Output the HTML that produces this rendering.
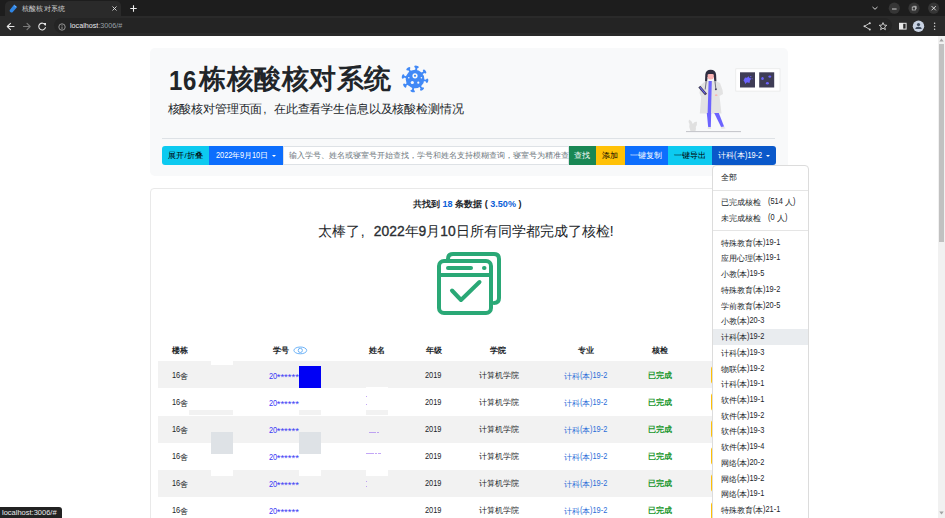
<!DOCTYPE html>
<html><head><meta charset="utf-8">
<style>
*{margin:0;padding:0;box-sizing:border-box}
html,body{width:945px;height:518px;overflow:hidden;background:#fff;font-family:"Liberation Sans",sans-serif;position:relative}
.a{position:absolute}
.t{white-space:nowrap;line-height:1}
/* chrome */
#tabbar{left:0;top:0;width:945px;height:17px;background:#1d1d1d}
#tab{left:5px;top:1px;width:116px;height:16px;background:#2a2a2a;border-radius:5px 5px 0 0}
#toolbar{left:0;top:16px;width:945px;height:19.5px;background:#2a2a2a}
#omni{left:53.5px;top:18px;width:838px;height:15px;background:#242424;border-radius:8px}
.btn{position:absolute;top:146px;height:18.5px;color:#fff;font-size:8px;line-height:18.5px;padding-top:1.2px;text-align:center;white-space:nowrap}
.car{display:inline-block;width:0;height:0;border-top:2.4px solid currentColor;border-left:2.2px solid transparent;border-right:2.2px solid transparent;vertical-align:1.6px;margin-left:3.8px}
.L{display:inline-block;white-space:nowrap}.L>span{display:inline-block;transform-origin:0 0;line-height:8px}
.dd{position:absolute;left:721px;font-size:8px;color:#212529;white-space:nowrap;line-height:1}
.row{position:absolute;left:158px;width:630px;height:27.1px}
.g{background:#f2f2f2}
.c{position:absolute;font-size:8px;color:#212529;white-space:nowrap;line-height:1}
.h{font-weight:bold}
</style></head>
<body>
<div id="tabbar" class="a"></div>
<div id="tab" class="a"></div>
<svg class="a" style="left:9px;top:4px" width="9" height="9" viewBox="0 0 9 9"><path d="M5.2 0.6 L8.2 3 L3.6 8.2 Q2.6 9 1.6 8.2 L0.9 7.5 Q0.3 6.6 1 5.7 Z" fill="#2f86e6"/><path d="M5.3 1.8 L7 3.1" stroke="#fff" stroke-width="0.6" opacity="0.7"/></svg>
<div class="a t" style="left:21.8px;top:5px;font-size:7px;letter-spacing:0.33px;color:#cfcfcf">核酸核对系统</div>
<svg class="a" style="left:112px;top:5.8px" width="5" height="5" viewBox="0 0 5 5"><path d="M0.5 0.5 L4.5 4.5 M4.5 0.5 L0.5 4.5" stroke="#e0e0e0" stroke-width="0.9"/></svg>
<svg class="a" style="left:130px;top:5px" width="7" height="7" viewBox="0 0 7 7"><path d="M3.5 0.3 V6.7 M0.3 3.5 H6.7" stroke="#f0f0f0" stroke-width="1.1"/></svg>
<div id="toolbar" class="a"></div>
<div id="omni" class="a"></div>
<svg class="a" style="left:6px;top:22px" width="44" height="9" viewBox="0 0 44 9">
<g fill="none" stroke-width="1.1" stroke-linecap="round" stroke-linejoin="round">
<path d="M8 4.5 H1.5 M4.5 1.3 L1.3 4.5 L4.5 7.7" stroke="#e6e6e6"/>
<path d="M17.5 4.5 H24 M21 1.3 L24.2 4.5 L21 7.7" stroke="#7a7a7a"/>
<path d="M39.2 3 A3.4 3.4 0 1 0 39.4 5.6" stroke="#e6e6e6"/>
</g>
<path d="M37.2 1 L40 1 L40 3.8 Z" fill="#e6e6e6"/>
</svg>
<svg class="a" style="left:58px;top:23px" width="8" height="8" viewBox="0 0 8 8"><circle cx="4" cy="4" r="3.2" fill="none" stroke="#a0a0a0" stroke-width="0.9"/><path d="M4 3.5 V6" stroke="#a0a0a0" stroke-width="0.9"/><circle cx="4" cy="2.3" r="0.5" fill="#a0a0a0"/></svg>
<div class="a t" style="left:70px;top:21.5px;font-size:7.2px;color:#e8eaed">localhost<span style="color:#9aa0a6">:3006/#</span></div>
<svg class="a" style="left:860px;top:20px" width="85" height="14" viewBox="860 20 85 14">
<g fill="none" stroke="#d5d5d5" stroke-width="0.9">
<path d="M869.6 23.2 L864.5 26.3 L869.6 29.4"/>
<path d="M883 22.6 L884.1 25.1 L886.8 25.3 L884.7 27 L885.4 29.7 L883 28.2 L880.6 29.7 L881.3 27 L879.2 25.3 L881.9 25.1 Z"/>
</g>
<g fill="#d5d5d5"><circle cx="869.8" cy="23.3" r="1"/><circle cx="864.5" cy="26.3" r="1"/><circle cx="869.8" cy="29.4" r="1"/></g>
<rect x="899" y="22.8" width="7.6" height="6.8" fill="#e8e8e8"/>
<rect x="903.2" y="23.8" width="2.4" height="4.8" fill="#2a2a2a"/>
<circle cx="918.5" cy="26.2" r="5.7" fill="#c9d3e3"/>
<circle cx="918.5" cy="24.6" r="1.6" fill="#3d4a5c"/>
<path d="M915.3 29 Q915.5 26.8 918.5 26.8 Q921.5 26.8 921.7 29 Z" fill="#3d4a5c"/>
<g fill="#d5d5d5"><circle cx="934.6" cy="23.2" r="0.75"/><circle cx="934.6" cy="26.2" r="0.75"/><circle cx="934.6" cy="29.2" r="0.75"/></g>
</svg>
<svg class="a" style="left:868px;top:0" width="77" height="17" viewBox="868 0 77 17">
<path d="M872.5 7 L875 9.3 L877.5 7" fill="none" stroke="#d5d5d5" stroke-width="1"/>
<circle cx="894.3" cy="8.2" r="5.6" fill="#363636"/>
<path d="M892 9 H896.6" stroke="#e0e0e0" stroke-width="0.9"/>
<circle cx="914" cy="8.2" r="5.6" fill="#363636"/>
<rect x="912.2" y="7" width="3.2" height="3" fill="none" stroke="#cfcfcf" stroke-width="0.7"/>
<path d="M913.3 6.3 H916.2 V9.1" fill="none" stroke="#cfcfcf" stroke-width="0.7"/>
<circle cx="933.7" cy="8.2" r="5.6" fill="#363636"/>
<path d="M931.6 6.1 L935.8 10.3 M935.8 6.1 L931.6 10.3" stroke="#e6e6e6" stroke-width="0.9"/>
</svg>

<!-- scrollbar -->
<div class="a" style="left:938px;top:36px;width:7px;height:482px;background:#f1f1f1"></div>
<div class="a" style="left:939px;top:44px;width:5px;height:198px;background:#c1c1c1"></div>

<svg class="a" style="left:938px;top:36px" width="7" height="482" viewBox="0 0 7 482"><path d="M1.3 5.6 L3.5 2.6 L5.7 5.6 Z" fill="#a3a3a3"/><path d="M1.3 475.5 L3.5 478.5 L5.7 475.5 Z" fill="#a3a3a3"/></svg>
<!-- jumbotron -->
<div class="a" style="left:150px;top:47.5px;width:637.8px;height:128.6px;background:#f8f9fa;border-radius:5px"></div>
<div class="a t" style="left:168px;top:66.2px;font-size:27px;letter-spacing:0.55px;font-weight:bold;color:#212529"><span style="display:inline-block;transform:translate(-0.6px,1.9px) scaleX(0.89)">16</span>栋核酸核对系统</div>
<div class="a t" style="left:167.5px;top:103.3px;font-size:11.74px;letter-spacing:-0.16px;color:#212529">核酸核对管理页面<span style="display:inline-block;width:1em;text-indent:0.08em">,</span>在此查看学生信息以及核酸检测情况</div>
<div class="a" style="left:162px;top:137.5px;width:613px;height:1px;background:#dee2e6"></div>


<!-- virus -->
<svg class="a" style="left:399px;top:63.3px" width="32" height="32" viewBox="-16 -16 32 32">
<g fill="#4189f6" stroke="#4189f6">
<circle r="9.3" stroke="none"/>
<g stroke-width="1.9" stroke-linecap="round">
<g transform="rotate(-83)"><line x1="8" y1="0" x2="11.5" y2="0"/><ellipse cx="12.2" cy="0" rx="1.25" ry="2.3" stroke="none"/></g>
<g transform="rotate(-38)"><line x1="8" y1="0" x2="11.5" y2="0"/><ellipse cx="12.2" cy="0" rx="1.25" ry="2.3" stroke="none"/></g>
<g transform="rotate(8)"><line x1="8" y1="0" x2="11.5" y2="0"/><ellipse cx="12.2" cy="0" rx="1.25" ry="2.3" stroke="none"/></g>
<g transform="rotate(55)"><line x1="8" y1="0" x2="11.5" y2="0"/><ellipse cx="12.2" cy="0" rx="1.25" ry="2.3" stroke="none"/></g>
<g transform="rotate(101)"><line x1="8" y1="0" x2="11.5" y2="0"/><ellipse cx="12.2" cy="0" rx="1.25" ry="2.3" stroke="none"/></g>
<g transform="rotate(147)"><line x1="8" y1="0" x2="11.5" y2="0"/><ellipse cx="12.2" cy="0" rx="1.25" ry="2.3" stroke="none"/></g>
<g transform="rotate(192)"><line x1="8" y1="0" x2="11.5" y2="0"/><ellipse cx="12.2" cy="0" rx="1.25" ry="2.3" stroke="none"/></g>
<g transform="rotate(237)"><line x1="8" y1="0" x2="11.5" y2="0"/><ellipse cx="12.2" cy="0" rx="1.25" ry="2.3" stroke="none"/></g>
</g>
</g>
<g fill="#f8f9fa">
<circle cx="0" cy="-3.2" r="2.6"/>
<circle cx="-6.2" cy="-1.2" r="0.8"/>
<circle cx="6.4" cy="-1.2" r="0.8"/>
<circle cx="-2.7" cy="3.5" r="1.6"/>
<circle cx="3.3" cy="3.7" r="1.1"/>
</g>
<circle cx="0" cy="-3.2" r="1.1" fill="#4189f6"/>
</svg>

<!-- doctor illustration -->
<svg class="a" style="left:684px;top:64px" width="110" height="72" viewBox="684 64 110 72">
<line x1="686" y1="131.6" x2="741" y2="131.6" stroke="#8d8c99" stroke-width="0.5"/>
<!-- plant -->
<path d="M690.5 131 Q688.5 127 689.5 124 Q688 121.5 689 119.5 Q692 120.5 692.8 124 Q694.5 121 697 121.8 Q697.3 125 695.8 127 Q696.3 129.5 695.5 131 Z" fill="#e0e0e0"/>
<!-- frame -->
<rect x="735.8" y="68.8" width="44.2" height="22.3" fill="#fff" stroke="#e6e6e6" stroke-width="0.7"/>
<rect x="740" y="72.3" width="15" height="15.2" fill="#3f3d56"/>
<rect x="759.2" y="72.3" width="15" height="15.2" fill="#3f3d56"/>
<path d="M743.5 80.5 L745 77.5 L747 77.8 L748.5 76.2 L749.6 78 L751.5 78.6 L750 80.5 L749.5 83 L747 82.2 L745.2 84 L744.6 82 Z" fill="#6c63ff"/>
<circle cx="750.8" cy="76.6" r="0.7" fill="#6c63ff"/>
<circle cx="752.2" cy="78.8" r="0.5" fill="#6c63ff"/>
<ellipse cx="762.5" cy="78.5" rx="1.3" ry="1.6" fill="#6c63ff"/>
<ellipse cx="769.8" cy="76.6" rx="1.4" ry="1.2" fill="#6c63ff"/>
<ellipse cx="767.4" cy="83.2" rx="1.5" ry="1.2" fill="#6c63ff"/>
<!-- coat -->
<path d="M705.5 81 L715.5 81 L720 83 L722.5 90 L723 94 L719.5 96 L721.5 113.5 L699.8 113.5 L701.2 97 L699.5 93 L700.8 85 Z" fill="#e3e3e3"/>
<!-- legs -->
<path d="M706.8 113 L711.2 113 L710.8 127.3 L708.2 127.3 Z" fill="#6c63ff"/>
<path d="M714.2 113 L718.8 113 L724.2 126.8 L721.2 127.3 Z" fill="#6c63ff"/>
<!-- shoes -->
<path d="M707.6 127.2 L711 127.2 L711.2 129 L707.8 129 Z" fill="#e6e6e6"/>
<path d="M720.8 127 L724.4 126.6 L725.5 128.6 L721.5 129 Z" fill="#e6e6e6"/>
<!-- scrubs strip -->
<path d="M708.6 81 L711.8 81 L711 113 L707.6 113 Z" fill="#6c63ff"/>
<!-- stethoscope -->
<path d="M706.2 81.5 L705.2 89.5 M715 81.5 L715.8 88.6" stroke="#3f3d56" stroke-width="0.7" fill="none"/>
<circle cx="715.9" cy="89.3" r="1" fill="#3f3d56"/>
<!-- hands -->
<circle cx="705.6" cy="93.6" r="1.1" fill="#f9b3b3"/>
<ellipse cx="716.2" cy="95.2" rx="1.3" ry="0.9" fill="#f9b3b3"/>
<!-- clipboard -->
<path d="M698.3 87.4 L700.3 85.8 L707 93.8 L705 95.3 Z" fill="#3f3d56"/>
<path d="M699.6 87.5 L700.4 86.9 L705.6 93.2 L704.8 93.8 Z" fill="#6c63ff"/>
<!-- hair -->
<path d="M705 81.2 L705.3 74.5 Q705.8 69.8 710.7 69.8 Q715.6 69.8 716.1 74.5 L716.4 81.2 L714.3 81.2 L713.8 77 L707.6 77 L707.1 81.2 Z" fill="#2f2e41"/>
<!-- face -->
<path d="M707.6 74 L713.8 74 L713.8 77.5 Q713.5 79.5 710.7 79.5 Q707.9 79.5 707.6 77.5 Z" fill="#f9b3b3"/>
<path d="M707 74.8 Q710.7 72.8 714.4 74.8 L714.4 72.5 L707 72.5 Z" fill="#2f2e41"/>
</svg>

<!-- toolbar buttons -->
<div class="btn" style="left:162px;width:47px;background:#0dcaf0;color:#000;border-radius:3px 0 0 3px">展开/折叠</div>
<div class="btn" style="left:209px;width:74px;background:#0d6efd"><span class="L" style="width:16.37px"><span style="font-size:9.2px;transform:scaleX(0.8)">2022</span></span>年<span class="L" style="width:4.09px"><span style="font-size:9.2px;transform:scaleX(0.8)">9</span></span>月<span class="L" style="width:8.19px"><span style="font-size:9.2px;transform:scaleX(0.8)">10</span></span>日<i class="car"></i></div>
<div class="a" style="left:283px;top:146px;width:285.5px;height:18.5px;background:#fff;border:0.5px solid #dee2e6"></div>
<div class="a t" style="left:289px;top:152px;font-size:7.6px;color:#6c757d">输入学号、姓名或寝室号开始查找，学号和姓名支持模糊查询，寝室号为精准查</div>
<div class="btn" style="left:568.5px;width:27.7px;background:#198754">查找</div>
<div class="btn" style="left:596.2px;width:28.5px;background:#ffc107;color:#000">添加</div>
<div class="btn" style="left:624.7px;width:43.5px;background:#0d6efd">一键复制</div>
<div class="btn" style="left:668.2px;width:43.8px;background:#0dcaf0;color:#000">一键导出</div>
<div class="btn" style="left:712px;width:64px;background:#0a58ca;border-radius:0 3px 3px 0">计科<span class="L" style="width:2.45px"><span style="font-size:9.2px;transform:scaleX(0.8)">(</span></span>本<span class="L" style="width:17.18px"><span style="font-size:9.2px;transform:scaleX(0.8)">)19-2</span></span><i class="car"></i></div>

<!-- card -->
<div class="a" style="left:150px;top:188px;width:638px;height:340px;border:1px solid #e9e9e9;border-radius:4px"></div>
<div class="a t" style="left:413px;top:200.2px;font-size:9.08px;font-weight:bold;color:#212529">共找到 <span style="color:#0b5ed7">18</span> 条数据 ( <span style="color:#0b5ed7">3.50%</span> )</div>
<div class="a t" style="left:318px;top:224.5px;font-size:13.84px;color:#212529">太棒了<span style="display:inline-block;width:1em;text-indent:0.05em">,</span><b style="color:#2b2f33;font-weight:normal;-webkit-text-stroke:0.35px #2b2f33">2022</b>年<b style="color:#2b2f33;font-weight:normal;-webkit-text-stroke:0.35px #2b2f33">9</b>月<b style="color:#2b2f33;font-weight:normal;-webkit-text-stroke:0.35px #2b2f33">10</b>日所有同学都完成了核检!</div>

<svg class="a" style="left:436px;top:251px" width="66" height="66" viewBox="0 0 66 66">
<g fill="none" stroke="#2aa876" stroke-width="4" stroke-linecap="round" stroke-linejoin="round">
<path d="M12 8 Q12 3 17 3 L58 3 Q63 3 63 8 L63 47 Q63 52 58 52"/>
<rect x="3" y="10" width="52" height="52" rx="5"/>
<line x1="3" y1="24" x2="55" y2="24"/>
<line x1="12" y1="17" x2="35" y2="17"/>
<line x1="48" y1="17" x2="48.5" y2="17"/>
<path d="M16 39.5 L25 49 L43.5 31"/>
</g>
</svg>

<!-- table -->
<div class="c h" style="left:172px;top:346.7px">楼栋</div>
<div class="c h" style="left:273px;top:346.7px">学号</div>
<div class="c h" style="left:369px;top:346.7px">姓名</div>
<div class="c h" style="left:426px;top:346.7px">年级</div>
<div class="c h" style="left:490px;top:346.7px">学院</div>
<div class="c h" style="left:578px;top:346.7px">专业</div>
<div class="c h" style="left:652px;top:346.7px">核检</div>

<svg class="a" style="left:293px;top:345.5px" width="15" height="9" viewBox="0 0 15 9"><ellipse cx="7.3" cy="4.4" rx="6.4" ry="3.4" fill="none" stroke="#6db3f8" stroke-width="1"/><circle cx="7.3" cy="4.4" r="2.1" fill="none" stroke="#6db3f8" stroke-width="1"/></svg>
<div id="rows">
<div class="row g" style="top:361.3px"></div>
<div class="c" style="left:172px;top:371.6px"><span class="L" style="width:8.23px"><span style="font-size:9.8px;transform:translateY(-0.6px) scaleX(0.755)">16</span></span>舍</div>
<div class="c" style="left:268.5px;top:371.6px;color:#3b3bf5"><span class="L" style="width:8.23px"><span style="font-size:9.8px;transform:translateY(-0.6px) scaleX(0.755)">20</span></span><span style="font-size:9.5px">******</span></div>
<div class="c" style="left:425px;top:371.6px"><span class="L" style="width:16.46px"><span style="font-size:9.8px;transform:translateY(-0.6px) scaleX(0.755)">2019</span></span></div>
<div class="c" style="left:479px;top:371.6px">计算机学院</div>
<div class="c" style="left:564px;top:371.6px;color:#2a6dd8">计科<span class="L" style="width:2.46px"><span style="font-size:9.8px;transform:translateY(-0.6px) scaleX(0.755)">(</span></span>本<span class="L" style="width:17.27px"><span style="font-size:9.8px;transform:translateY(-0.6px) scaleX(0.755)">)19-2</span></span></div>
<div class="c h" style="left:648px;top:371.6px;color:#17962b">已完成</div>
<div class="a" style="left:711px;top:365.8px;width:20px;height:18px;background:#ffc107;border-radius:3px"></div>
<div class="row" style="top:388.4px"></div>
<div class="c" style="left:172px;top:398.7px"><span class="L" style="width:8.23px"><span style="font-size:9.8px;transform:translateY(-0.6px) scaleX(0.755)">16</span></span>舍</div>
<div class="c" style="left:268.5px;top:398.7px;color:#3b3bf5"><span class="L" style="width:8.23px"><span style="font-size:9.8px;transform:translateY(-0.6px) scaleX(0.755)">20</span></span><span style="font-size:9.5px">******</span></div>
<div class="c" style="left:425px;top:398.7px"><span class="L" style="width:16.46px"><span style="font-size:9.8px;transform:translateY(-0.6px) scaleX(0.755)">2019</span></span></div>
<div class="c" style="left:479px;top:398.7px">计算机学院</div>
<div class="c" style="left:564px;top:398.7px;color:#2a6dd8">计科<span class="L" style="width:2.46px"><span style="font-size:9.8px;transform:translateY(-0.6px) scaleX(0.755)">(</span></span>本<span class="L" style="width:17.27px"><span style="font-size:9.8px;transform:translateY(-0.6px) scaleX(0.755)">)19-2</span></span></div>
<div class="c h" style="left:648px;top:398.7px;color:#17962b">已完成</div>
<div class="a" style="left:711px;top:392.9px;width:20px;height:18px;background:#ffc107;border-radius:3px"></div>
<div class="row g" style="top:415.6px"></div>
<div class="c" style="left:172px;top:425.9px"><span class="L" style="width:8.23px"><span style="font-size:9.8px;transform:translateY(-0.6px) scaleX(0.755)">16</span></span>舍</div>
<div class="c" style="left:268.5px;top:425.9px;color:#3b3bf5"><span class="L" style="width:8.23px"><span style="font-size:9.8px;transform:translateY(-0.6px) scaleX(0.755)">20</span></span><span style="font-size:9.5px">******</span></div>
<div class="c" style="left:425px;top:425.9px"><span class="L" style="width:16.46px"><span style="font-size:9.8px;transform:translateY(-0.6px) scaleX(0.755)">2019</span></span></div>
<div class="c" style="left:479px;top:425.9px">计算机学院</div>
<div class="c" style="left:564px;top:425.9px;color:#2a6dd8">计科<span class="L" style="width:2.46px"><span style="font-size:9.8px;transform:translateY(-0.6px) scaleX(0.755)">(</span></span>本<span class="L" style="width:17.27px"><span style="font-size:9.8px;transform:translateY(-0.6px) scaleX(0.755)">)19-2</span></span></div>
<div class="c h" style="left:648px;top:425.9px;color:#17962b">已完成</div>
<div class="a" style="left:711px;top:420.1px;width:20px;height:18px;background:#ffc107;border-radius:3px"></div>
<div class="row" style="top:442.7px"></div>
<div class="c" style="left:172px;top:453.0px"><span class="L" style="width:8.23px"><span style="font-size:9.8px;transform:translateY(-0.6px) scaleX(0.755)">16</span></span>舍</div>
<div class="c" style="left:268.5px;top:453.0px;color:#3b3bf5"><span class="L" style="width:8.23px"><span style="font-size:9.8px;transform:translateY(-0.6px) scaleX(0.755)">20</span></span><span style="font-size:9.5px">******</span></div>
<div class="c" style="left:425px;top:453.0px"><span class="L" style="width:16.46px"><span style="font-size:9.8px;transform:translateY(-0.6px) scaleX(0.755)">2019</span></span></div>
<div class="c" style="left:479px;top:453.0px">计算机学院</div>
<div class="c" style="left:564px;top:453.0px;color:#2a6dd8">计科<span class="L" style="width:2.46px"><span style="font-size:9.8px;transform:translateY(-0.6px) scaleX(0.755)">(</span></span>本<span class="L" style="width:17.27px"><span style="font-size:9.8px;transform:translateY(-0.6px) scaleX(0.755)">)19-2</span></span></div>
<div class="c h" style="left:648px;top:453.0px;color:#17962b">已完成</div>
<div class="a" style="left:711px;top:447.2px;width:20px;height:18px;background:#ffc107;border-radius:3px"></div>
<div class="row g" style="top:469.9px"></div>
<div class="c" style="left:172px;top:480.2px"><span class="L" style="width:8.23px"><span style="font-size:9.8px;transform:translateY(-0.6px) scaleX(0.755)">16</span></span>舍</div>
<div class="c" style="left:268.5px;top:480.2px;color:#3b3bf5"><span class="L" style="width:8.23px"><span style="font-size:9.8px;transform:translateY(-0.6px) scaleX(0.755)">20</span></span><span style="font-size:9.5px">******</span></div>
<div class="c" style="left:425px;top:480.2px"><span class="L" style="width:16.46px"><span style="font-size:9.8px;transform:translateY(-0.6px) scaleX(0.755)">2019</span></span></div>
<div class="c" style="left:479px;top:480.2px">计算机学院</div>
<div class="c" style="left:564px;top:480.2px;color:#2a6dd8">计科<span class="L" style="width:2.46px"><span style="font-size:9.8px;transform:translateY(-0.6px) scaleX(0.755)">(</span></span>本<span class="L" style="width:17.27px"><span style="font-size:9.8px;transform:translateY(-0.6px) scaleX(0.755)">)19-2</span></span></div>
<div class="c h" style="left:648px;top:480.2px;color:#17962b">已完成</div>
<div class="a" style="left:711px;top:474.4px;width:20px;height:18px;background:#ffc107;border-radius:3px"></div>
<div class="row" style="top:497.0px"></div>
<div class="c" style="left:172px;top:507.3px"><span class="L" style="width:8.23px"><span style="font-size:9.8px;transform:translateY(-0.6px) scaleX(0.755)">16</span></span>舍</div>
<div class="c" style="left:268.5px;top:507.3px;color:#3b3bf5"><span class="L" style="width:8.23px"><span style="font-size:9.8px;transform:translateY(-0.6px) scaleX(0.755)">20</span></span><span style="font-size:9.5px">******</span></div>
<div class="c" style="left:425px;top:507.3px"><span class="L" style="width:16.46px"><span style="font-size:9.8px;transform:translateY(-0.6px) scaleX(0.755)">2019</span></span></div>
<div class="c" style="left:479px;top:507.3px">计算机学院</div>
<div class="c" style="left:564px;top:507.3px;color:#2a6dd8">计科<span class="L" style="width:2.46px"><span style="font-size:9.8px;transform:translateY(-0.6px) scaleX(0.755)">(</span></span>本<span class="L" style="width:17.27px"><span style="font-size:9.8px;transform:translateY(-0.6px) scaleX(0.755)">)19-2</span></span></div>
<div class="c h" style="left:648px;top:507.3px;color:#17962b">已完成</div>
<div class="a" style="left:711px;top:501.5px;width:20px;height:18px;background:#ffc107;border-radius:3px"></div>
<div class="a" style="left:210.6px;top:361.3px;width:22.1px;height:4.2px;background:#fff"></div>
<div class="a" style="left:299.2px;top:365.5px;width:22.1px;height:22.0px;background:#0000f5"></div>
<div class="a" style="left:189px;top:387.6px;width:43.7px;height:1.4px;background:#fff"></div>
<div class="a" style="left:365.6px;top:387.4px;width:22.4px;height:1.6px;background:#fff"></div>
<div class="a" style="left:189px;top:410.2px;width:43.7px;height:5.2px;background:#f2f2f2"></div>
<div class="a" style="left:299.2px;top:410.2px;width:22.1px;height:5.2px;background:#f2f2f2"></div>
<div class="a" style="left:365.6px;top:409.8px;width:22.4px;height:5.6px;background:#f2f2f2"></div>
<div class="a" style="left:210.6px;top:432px;width:22.1px;height:22.0px;background:#dee2e6"></div>
<div class="a" style="left:299.2px;top:432px;width:22.1px;height:22.0px;background:#dee2e6"></div>
<div class="a" style="left:210.6px;top:469.5px;width:22.1px;height:6.3px;background:#fff"></div>
<div class="a" style="left:299.2px;top:469.5px;width:22.1px;height:6.3px;background:#fff"></div>
<div class="a" style="left:365.6px;top:469.5px;width:22.4px;height:6.3px;background:#fff"></div>
<div class="a" style="left:369px;top:432.2px;width:7px;height:0.9px;background:#9b6cf0;opacity:.6"></div>
<div class="a" style="left:377px;top:432.2px;width:2px;height:0.9px;background:#9b6cf0;opacity:.6"></div>
<div class="a" style="left:365.5px;top:452.8px;width:5px;height:0.9px;background:#9b6cf0;opacity:.6"></div>
<div class="a" style="left:371px;top:452.8px;width:3px;height:0.9px;background:#9b6cf0;opacity:.6"></div>
<div class="a" style="left:375px;top:452.8px;width:1.5px;height:0.9px;background:#9b6cf0;opacity:.6"></div>
<div class="a" style="left:378px;top:452.8px;width:3px;height:0.9px;background:#9b6cf0;opacity:.6"></div>
<div class="a" style="left:365.6px;top:480.6px;width:0.8px;height:0.9px;background:#9b6cf0;opacity:.6"></div>
<div class="a" style="left:365.6px;top:486.3px;width:0.8px;height:0.9px;background:#9b6cf0;opacity:.6"></div>
<div class="a" style="left:365.6px;top:404.2px;width:0.8px;height:0.9px;background:#9b6cf0;opacity:.6"></div>
<div class="a" style="left:366px;top:395.5px;width:0.6px;height:0.9px;background:#9b6cf0;opacity:.6"></div>
</div><!--/rows-->

<!-- dropdown -->
<div class="a" style="left:712px;top:165px;width:96.5px;height:360px;background:#fff;border:1px solid #dcdcdc;border-radius:4px"></div>
<div class="a" style="left:713px;top:329px;width:94.5px;height:15.7px;background:#e9ecef"></div>
<div class="a" style="left:713px;top:189.5px;width:94.5px;height:1px;background:#e5e5e5"></div>
<div class="a" style="left:713px;top:229.5px;width:94.5px;height:1px;background:#e5e5e5"></div>
<div id="dd">
<div class="dd" style="top:174.3px">全部</div>
<div class="dd" style="top:198.3px">已完成核检<span style="display:inline-block;width:7px"></span><span class="L" style="width:14.81px"><span style="font-size:9.8px;transform:translateY(-0.6px) scaleX(0.755)">(514</span></span><span style="display:inline-block;width:2.5px"></span>人<span class="L" style="width:2.46px"><span style="font-size:9.8px;transform:translateY(-0.6px) scaleX(0.755)">)</span></span></div>
<div class="dd" style="top:213.8px">未完成核检<span style="display:inline-block;width:7px"></span><span class="L" style="width:6.58px"><span style="font-size:9.8px;transform:translateY(-0.6px) scaleX(0.755)">(0</span></span><span style="display:inline-block;width:2.5px"></span>人<span class="L" style="width:2.46px"><span style="font-size:9.8px;transform:translateY(-0.6px) scaleX(0.755)">)</span></span></div>
<div class="dd" style="top:238.7px">特殊教育<span class="L" style="width:2.46px"><span style="font-size:9.8px;transform:translateY(-0.6px) scaleX(0.755)">(</span></span>本<span class="L" style="width:17.27px"><span style="font-size:9.8px;transform:translateY(-0.6px) scaleX(0.755)">)19-1</span></span></div>
<div class="dd" style="top:254.4px">应用心理<span class="L" style="width:2.46px"><span style="font-size:9.8px;transform:translateY(-0.6px) scaleX(0.755)">(</span></span>本<span class="L" style="width:17.27px"><span style="font-size:9.8px;transform:translateY(-0.6px) scaleX(0.755)">)19-1</span></span></div>
<div class="dd" style="top:270.1px">小教<span class="L" style="width:2.46px"><span style="font-size:9.8px;transform:translateY(-0.6px) scaleX(0.755)">(</span></span>本<span class="L" style="width:17.27px"><span style="font-size:9.8px;transform:translateY(-0.6px) scaleX(0.755)">)19-5</span></span></div>
<div class="dd" style="top:285.9px">特殊教育<span class="L" style="width:2.46px"><span style="font-size:9.8px;transform:translateY(-0.6px) scaleX(0.755)">(</span></span>本<span class="L" style="width:17.27px"><span style="font-size:9.8px;transform:translateY(-0.6px) scaleX(0.755)">)19-2</span></span></div>
<div class="dd" style="top:301.6px">学前教育<span class="L" style="width:2.46px"><span style="font-size:9.8px;transform:translateY(-0.6px) scaleX(0.755)">(</span></span>本<span class="L" style="width:17.27px"><span style="font-size:9.8px;transform:translateY(-0.6px) scaleX(0.755)">)20-5</span></span></div>
<div class="dd" style="top:317.3px">小教<span class="L" style="width:2.46px"><span style="font-size:9.8px;transform:translateY(-0.6px) scaleX(0.755)">(</span></span>本<span class="L" style="width:17.27px"><span style="font-size:9.8px;transform:translateY(-0.6px) scaleX(0.755)">)20-3</span></span></div>
<div class="dd" style="top:333.0px">计科<span class="L" style="width:2.46px"><span style="font-size:9.8px;transform:translateY(-0.6px) scaleX(0.755)">(</span></span>本<span class="L" style="width:17.27px"><span style="font-size:9.8px;transform:translateY(-0.6px) scaleX(0.755)">)19-2</span></span></div>
<div class="dd" style="top:348.7px">计科<span class="L" style="width:2.46px"><span style="font-size:9.8px;transform:translateY(-0.6px) scaleX(0.755)">(</span></span>本<span class="L" style="width:17.27px"><span style="font-size:9.8px;transform:translateY(-0.6px) scaleX(0.755)">)19-3</span></span></div>
<div class="dd" style="top:364.5px">物联<span class="L" style="width:2.46px"><span style="font-size:9.8px;transform:translateY(-0.6px) scaleX(0.755)">(</span></span>本<span class="L" style="width:17.27px"><span style="font-size:9.8px;transform:translateY(-0.6px) scaleX(0.755)">)19-2</span></span></div>
<div class="dd" style="top:380.2px">计科<span class="L" style="width:2.46px"><span style="font-size:9.8px;transform:translateY(-0.6px) scaleX(0.755)">(</span></span>本<span class="L" style="width:17.27px"><span style="font-size:9.8px;transform:translateY(-0.6px) scaleX(0.755)">)19-1</span></span></div>
<div class="dd" style="top:395.9px">软件<span class="L" style="width:2.46px"><span style="font-size:9.8px;transform:translateY(-0.6px) scaleX(0.755)">(</span></span>本<span class="L" style="width:17.27px"><span style="font-size:9.8px;transform:translateY(-0.6px) scaleX(0.755)">)19-1</span></span></div>
<div class="dd" style="top:411.6px">软件<span class="L" style="width:2.46px"><span style="font-size:9.8px;transform:translateY(-0.6px) scaleX(0.755)">(</span></span>本<span class="L" style="width:17.27px"><span style="font-size:9.8px;transform:translateY(-0.6px) scaleX(0.755)">)19-2</span></span></div>
<div class="dd" style="top:427.3px">软件<span class="L" style="width:2.46px"><span style="font-size:9.8px;transform:translateY(-0.6px) scaleX(0.755)">(</span></span>本<span class="L" style="width:17.27px"><span style="font-size:9.8px;transform:translateY(-0.6px) scaleX(0.755)">)19-3</span></span></div>
<div class="dd" style="top:443.1px">软件<span class="L" style="width:2.46px"><span style="font-size:9.8px;transform:translateY(-0.6px) scaleX(0.755)">(</span></span>本<span class="L" style="width:17.27px"><span style="font-size:9.8px;transform:translateY(-0.6px) scaleX(0.755)">)19-4</span></span></div>
<div class="dd" style="top:458.8px">网络<span class="L" style="width:2.46px"><span style="font-size:9.8px;transform:translateY(-0.6px) scaleX(0.755)">(</span></span>本<span class="L" style="width:17.27px"><span style="font-size:9.8px;transform:translateY(-0.6px) scaleX(0.755)">)20-2</span></span></div>
<div class="dd" style="top:474.5px">网络<span class="L" style="width:2.46px"><span style="font-size:9.8px;transform:translateY(-0.6px) scaleX(0.755)">(</span></span>本<span class="L" style="width:17.27px"><span style="font-size:9.8px;transform:translateY(-0.6px) scaleX(0.755)">)19-2</span></span></div>
<div class="dd" style="top:490.2px">网络<span class="L" style="width:2.46px"><span style="font-size:9.8px;transform:translateY(-0.6px) scaleX(0.755)">(</span></span>本<span class="L" style="width:17.27px"><span style="font-size:9.8px;transform:translateY(-0.6px) scaleX(0.755)">)19-1</span></span></div>
<div class="dd" style="top:505.9px">特殊教育<span class="L" style="width:2.46px"><span style="font-size:9.8px;transform:translateY(-0.6px) scaleX(0.755)">(</span></span>本<span class="L" style="width:17.27px"><span style="font-size:9.8px;transform:translateY(-0.6px) scaleX(0.755)">)21-1</span></span></div>
</div><!--/dd-->

<!-- status bubble -->
<div class="a" style="left:0;top:507px;width:62px;height:11px;background:#222;border-radius:0 3px 0 0"></div>
<div class="a t" style="left:2px;top:509px;font-size:7.5px;color:#e8eaed">localhost:3006/#</div>
</body></html>
